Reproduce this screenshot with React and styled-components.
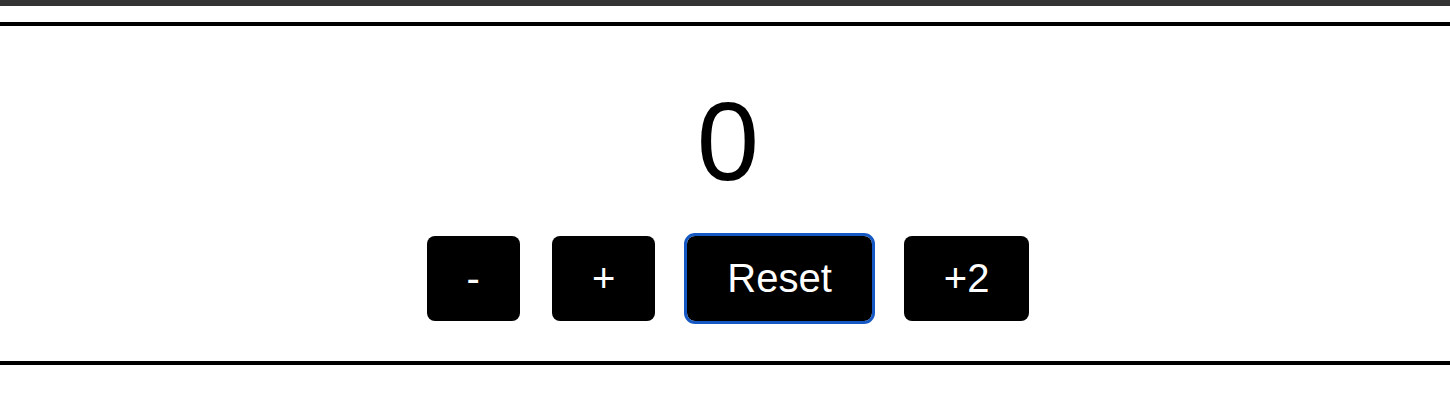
import React, { useState } from 'react'
import styled, { createGlobalStyle } from 'styled-components'

const GlobalStyle = createGlobalStyle`
body {
    margin: 0;
    background: #fff;
    font-family: "Liberation Sans", Arial, sans-serif;
}
`;

const TopBar = styled.div`
height: 6px;
background: #333333;
`;

const CounterSection = styled.section`
margin-top: 16px;
border-top: 4px solid #000;
border-bottom: 4px solid #000;
padding: 52px 0 40px 6px;
display: flex;
flex-direction: column;
align-items: center;
`;

const Count = styled.div`
font-size: 112px;
line-height: 128px;
color: #000;
margin-bottom: 30px;
`;

const ButtonRow = styled.div`
display: flex;
justify-content: center;
gap: 32px;
`;

const CounterButton = styled.button`
font-family: "Liberation Sans", Arial, sans-serif;
font-size: 40px;
line-height: 45px;
color: #fff;
background: #000;
border: none;
border-radius: 8px;
padding: 20px 40px;
cursor: pointer;
outline: ${({ focused }) => (focused ? '3px solid #1558c4' : 'none')};
outline-offset: 0;
`;

function App() {
    const [count, setCount] = useState(0)
    const [focused, setFocused] = useState('reset')

    return (
        <>
            <GlobalStyle />
            <TopBar />
            <CounterSection>
                <Count>{count}</Count>
                <ButtonRow>
                    <CounterButton focused={focused === 'dec'} onClick={() => { setCount(count - 1); setFocused('dec') }}>-</CounterButton>
                    <CounterButton focused={focused === 'inc'} onClick={() => { setCount(count + 1); setFocused('inc') }}>+</CounterButton>
                    <CounterButton focused={focused === 'reset'} onClick={() => { setCount(0); setFocused('reset') }}>Reset</CounterButton>
                    <CounterButton focused={focused === 'inc2'} onClick={() => { setCount(count + 2); setFocused('inc2') }}>+2</CounterButton>
                </ButtonRow>
            </CounterSection>
        </>
    )
}

export default App
